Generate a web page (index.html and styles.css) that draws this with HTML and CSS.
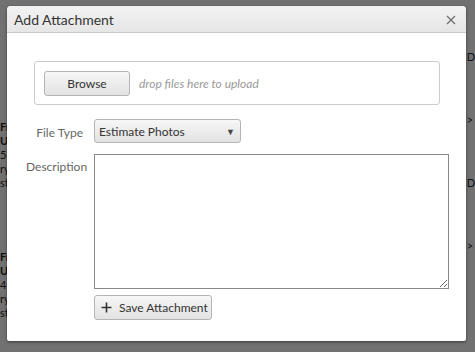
FILE: index.html
```html
<!DOCTYPE html>
<html lang="en">
<head>
    <meta charset="UTF-8">
    <meta name="viewport" content="width=device-width, initial-scale=1.0">
    <title>Add Attachment</title>
    <link rel="stylesheet" href="styles.css">
</head>
<body>
    <div class="page">
        <div class="page-col left">
            <div class="row"><b>Fr</b><br><b>U</b><br>5c<br>ry<br>st</div>
            <div class="row"><b>Fr</b><br><b>U</b><br>4<br>ry<br>st</div>
        </div>
        <div class="page-col right">
            <div class="row">D</div>
            <div class="row">&gt;</div>
            <div class="row">D</div>
            <div class="row">&gt;</div>
        </div>
    </div>
    <div class="overlay"></div>

    <div class="dialog">
        <div class="dialog-header">
            <span class="dialog-title">Add Attachment</span>
            <svg class="close" width="10" height="10" viewBox="0 0 10 10"><path d="M1 1l8 8M9 1l-8 8" stroke="#707070" stroke-width="1.3"/></svg>
        </div>
        <div class="dialog-body">
            <div class="dropzone">
                <button class="btn browse">Browse</button>
                <span class="drop-hint">drop files here to upload</span>
            </div>
            <div class="field">
                <label>File Type</label>
                <div class="select">
                    <span>Estimate Photos</span>
                    <span class="caret">&#9660;</span>
                </div>
            </div>
            <div class="field">
                <label>Description</label>
                <div class="desc">
                    <textarea></textarea>
                    <button class="btn save">
                        <svg width="11" height="11" viewBox="0 0 11 11"><path d="M5.5 0.5v10M0.5 5.5h10" stroke="#333" stroke-width="1.6"/></svg>
                        Save Attachment
                    </button>
                </div>
            </div>
        </div>
    </div>
</body>
</html>
```

FILE: styles.css
```css
* {
    box-sizing: border-box;
}
body {
    margin: 0;
    font-family: Lato, "Open Sans", sans-serif;
    font-size: 12px;
    background: #ddd;
    width: 475px;
    height: 352px;
    overflow: hidden;
    position: relative;
}
.page {
    display: flex;
    justify-content: space-between;
    height: 352px;
    color: #222;
    font-size: 11px;
}
.page-col.left .row {
    padding: 120px 0 0 0;
    line-height: 14px;
}
.page-col.left .row + .row {
    padding-top: 60px;
}
.page-col.right .row {
    padding-top: 50px;
}
.overlay {
    position: absolute;
    inset: 0;
    background: rgba(0, 0, 0, 0.49);
}
.dialog {
    position: absolute;
    left: 7px;
    top: 6px;
    width: 459px;
    height: 335px;
    background: #fff;
    border-radius: 4px 4px 2px 2px;
    box-shadow: 0 1px 3px rgba(0, 0, 0, 0.5);
    overflow: hidden;
}
.dialog-header {
    height: 27px;
    display: flex;
    align-items: center;
    justify-content: space-between;
    padding: 0 10px 0 7px;
    background: linear-gradient(#f3f3f3, #e6e6e6);
    border-bottom: 1px solid #c8c8c8;
}
.dialog-title {
    font-size: 14px;
    color: #333;
    padding-top: 1px;
}
.close {
    margin-top: 1px;
}
.dialog-body {
    padding: 28px 16px 0 19px;
}
.dropzone {
    width: 406px;
    height: 44px;
    margin-left: 8px;
    border: 1px solid #ccc;
    border-radius: 3px;
    display: flex;
    align-items: center;
    padding-left: 9px;
}
.btn {
    font-family: inherit;
    font-size: 12px;
    color: #333;
    height: 25px;
    border: 1px solid #b4b4b4;
    border-radius: 3px;
    background: linear-gradient(#f7f7f7, #e2e2e2);
    padding: 0;
}
.browse {
    width: 86px;
}
.drop-hint {
    margin-left: 9px;
    color: #999;
    font-style: italic;
}
.field {
    display: flex;
    margin-top: 14px;
}
.field + .field {
    margin-top: 11px;
}
.field label {
    width: 57px;
    text-align: right;
    margin-right: 11px;
    color: #666;
    padding-top: 6px;
}
.field + .field label {
    padding-top: 5px;
}
.select {
    width: 147px;
    height: 24px;
    border: 1px solid #b4b4b4;
    border-radius: 3px;
    background: linear-gradient(#f7f7f7, #e2e2e2);
    display: flex;
    align-items: center;
    justify-content: space-between;
    padding: 0 5px 0 4px;
    color: #333;
}
.caret {
    font-size: 9px;
    color: #444;
}
.desc {
    display: flex;
    flex-direction: column;
    align-items: flex-start;
}
textarea {
    width: 355px;
    height: 135px;
    border: 1px solid #888;
    margin: 0;
    padding: 0;
    resize: both;
}
.save {
    margin-top: 6px;
    width: 118px;
    display: flex;
    align-items: center;
    gap: 7px;
    padding-left: 6px;
}
```
